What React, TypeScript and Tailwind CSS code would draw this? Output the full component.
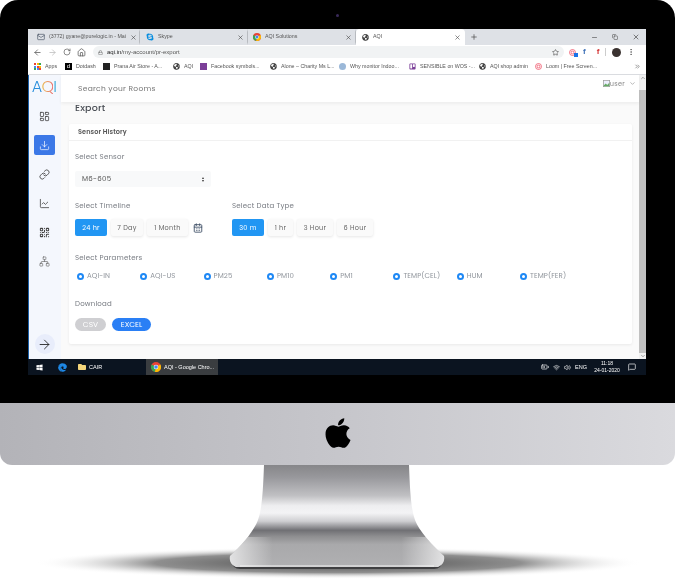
import React from 'react';
import {
  ArrowLeft, ArrowRight, RotateCw, Home, Lock, Star, X, Plus, Minus, Copy, MoreVertical, ChevronDown,
  Download, Link, ChartLine, QrCode, Network, LayoutDashboard, CalendarDays, ChevronsRight, ChevronUp, Mail,
  Volume2, Wifi, BatteryMedium, MessageSquare,
} from 'lucide-react';
import { FaApple, FaWindows, FaEdge, FaSkype, FaGlobeAmericas, FaTrello, FaFolder } from 'react-icons/fa';

const sans = "font-['Poppins','Lato','Noto_Sans',sans-serif]";

const ChromeDot = ({ size = 8 }: { size?: number }) => (
  <svg width={size} height={size} viewBox="0 0 20 20" className="shrink-0">
    <circle cx="10" cy="10" r="10" fill="#ea4335" />
    <path d="M10 10 L1.3 5 A10 10 0 0 0 8 19.8 Z" fill="#34a853" />
    <path d="M10 10 L8 19.8 A10 10 0 0 0 18.7 5 Z" fill="#fbbc04" />
    <circle cx="10" cy="10" r="4.6" fill="#fff" />
    <circle cx="10" cy="10" r="3.6" fill="#4285f4" />
  </svg>
);

const Target = ({ size = 7 }: { size?: number }) => (
  <svg width={size} height={size} viewBox="0 0 20 20" className="shrink-0" fill="none" stroke="#ef5a6f" strokeWidth="2.4">
    <circle cx="10" cy="10" r="8.5" />
    <circle cx="10" cy="10" r="4" />
  </svg>
);

const tabs = [
  { title: '(3772) gyane@purelogic.in - Mai', pl: 'pl-[5px]', icon: <Mail size={8} className="text-gray-600 shrink-0" /> },
  { title: 'Skype', pl: 'pl-[6px]', icon: <FaSkype size={8} className="text-[#0a8fe0] shrink-0" /> },
  { title: 'AQI Solutions', pl: 'pl-[5px]', icon: <ChromeDot /> },
];

const bookmarks = [
  { w: 'w-[38px]', text: 'Dotdash', icon: <span className="w-[7px] h-[7px] bg-black text-white text-[6px] leading-[7px] text-center shrink-0">d</span> },
  { w: 'w-[70px]', text: 'Prana Air Store - A...', icon: <span className="w-[7px] h-[7px] bg-[#222] shrink-0" /> },
  { w: 'w-[27px]', text: 'AQI', icon: <FaGlobeAmericas size={7} className="text-[#444] shrink-0" /> },
  { w: 'w-[70px]', text: 'Facebook symbols...', icon: <span className="w-[7px] h-[7px] bg-[#7b3f98] shrink-0" /> },
  { w: 'w-[69px]', text: 'Alone – Charity Ms L...', icon: <FaGlobeAmericas size={7} className="text-[#444] shrink-0" /> },
  { w: 'w-[70px]', text: 'Why monitor Indoo...', icon: <span className="w-[7px] h-[7px] rounded-full bg-[#9bb8d8] shrink-0" /> },
  { w: 'w-[70px]', text: 'SENSIBLE on WOS -...', icon: <FaTrello size={7} className="text-[#7b3f98] shrink-0" /> },
  { w: 'w-[56px]', text: 'AQI shop admin', icon: <FaGlobeAmericas size={7} className="text-[#444] shrink-0" /> },
  { w: 'w-[70px]', text: 'Loom | Free Screen...', icon: <Target /> },
];

const sideIcons = [
  { Icon: LayoutDashboard, sw: 1.6, tone: 'text-[#333]' },
  { Icon: Download, sw: 1.5, tone: 'bg-[#3b78e7] text-white' },
  { Icon: Link, sw: 1.7, tone: 'text-[#333]' },
  { Icon: ChartLine, sw: 1.6, tone: 'text-[#333]' },
  { Icon: QrCode, sw: 2.2, tone: 'text-[#444]' },
  { Icon: Network, sw: 1.4, tone: 'text-[#666]' },
];
const params = ['AQI-IN', 'AQI-US', 'PM25', 'PM10', 'PM1', 'TEMP(CEL)', 'HUM', 'TEMP(FER)'];

const Label = ({ children, className = '' }: { children: React.ReactNode; className?: string }) => (
  <div className={`h-[10px] leading-[10px] text-[7px] tracking-[0.2px] text-[#777b82] ${className}`}>{children}</div>
);

const Seg = ({ children, active, w }: { children: React.ReactNode; active?: boolean; w: string }) => (
  <span
    className={`${w} h-[17px] rounded-[2px] flex items-center justify-center text-[6.5px] tracking-[0.3px] ${
      active ? 'bg-[#2196f3] text-white' : 'bg-[#fafafa] text-[#666] shadow-[0_1px_3px_rgba(0,0,0,0.1)]'
    }`}
  >
    {children}
  </span>
);

function Browser() {
  return (
    <div className="w-full h-[330px] flex flex-col bg-white overflow-hidden">
      {/* tab strip */}
      <div className="h-[16px] bg-[#dee1e6] flex items-end pl-[4px] text-[5.3px] text-[#555] font-['Liberation_Sans',sans-serif]">
        {tabs.map((t) => (
          <div key={t.title} className={`w-[108px] h-[16px] flex items-center gap-[4px] ${t.pl} pr-[3px] border-r border-[#b8bbc0] border-y-[3px] border-y-[#dee1e6]`}>
            {t.icon}
            <span className="flex-1 whitespace-nowrap">{t.title}</span>
            <X size={7} className="text-[#444] shrink-0" />
          </div>
        ))}
        <div className="w-[109px] h-[16px] bg-white rounded-t-[4px] flex items-center gap-[4px] pl-[6px] pr-[4px]">
          <FaGlobeAmericas size={7} className="text-[#444] shrink-0" />
          <span className="flex-1">AQI</span>
          <X size={7} className="text-[#444]" />
        </div>
        <Plus size={8} className="ml-[5px] mb-[4px] text-[#444]" />
        <div className="ml-auto flex items-center gap-[14px] pr-[6px] h-[16px]">
          <Minus size={7} className="text-[#444]" />
          <Copy size={6} className="text-[#444]" />
          <X size={8} className="text-[#444]" />
        </div>
      </div>

      {/* toolbar */}
      <div className="h-[14px] flex items-center pl-[5px] text-[#555] font-['Liberation_Sans',sans-serif]">
        <ArrowLeft size={9} />
        <ArrowRight size={9} className="ml-[6px] text-[#bbb]" />
        <RotateCw size={8} className="ml-[6px]" />
        <Home size={9} className="ml-[6px]" />
        <div className="ml-[7px] w-[471px] h-[12px] rounded-full bg-[#f1f3f4] flex items-center pl-[5px] pr-[5px] text-[6px]">
          <Lock size={5} />
          <span className="ml-[4px]"><span className="text-[#222]">aqi.in</span>/my-account/pr-export</span>
          <Star size={7} className="ml-auto text-[#444]" />
        </div>
        <span className="ml-[5px] relative"><Target size={7} /><span className="absolute -right-[2px] -bottom-[1px] w-[4px] h-[4px] bg-[#1a73e8]" /></span>
        <span className="ml-[7px] text-[8px] font-bold leading-none text-[#3b6fb6]">f</span>
        <span className="ml-[11px] text-[8px] font-bold leading-none text-[#d32f2f]">f</span>
        <span className="ml-[6px] w-px h-[8px] bg-[#ccc]" />
        <span className="ml-[6px] w-[9px] h-[9px] rounded-full bg-[#3a3230]" />
        <MoreVertical size={8} className="ml-[6px]" />
      </div>

      {/* bookmarks */}
      <div className="h-[16px] flex items-center pl-[6px] pr-[5px] text-[5.3px] text-[#555] border-b border-[#dadce0] font-['Liberation_Sans',sans-serif]">
        <div className="w-[31px] flex items-center gap-[4px]">
          <span className="w-[7px] h-[7px] grid grid-cols-3 gap-[0.5px]">
            {['#ea4335', '#fbbc04', '#34a853', '#4285f4', '#ea4335', '#fbbc04', '#34a853', '#4285f4', '#ea4335'].map((c, i) => (
              <span key={i} className="bg-current" style={{ color: c }} />
            ))}
          </span>
          Apps
        </div>
        {bookmarks.map((b) => (
          <div key={b.text} className={`${b.w} flex items-center gap-[4px]`}>
            {b.icon}
            <span className="whitespace-nowrap">{b.text}</span>
          </div>
        ))}
        <ChevronsRight size={7} className="ml-auto" />
      </div>

      {/* page */}
      <div className={`flex-1 min-h-0 flex ${sans}`}>
        <aside className="w-[33px] bg-[#f4f7fd] flex flex-col items-center shadow-[inset_1px_0_0_#1a5fa8]">
          <div className="h-[27px] w-full flex items-center justify-center pb-[3px] text-[16px] leading-none font-light tracking-[-0.8px] pr-[1px]">
            <span className="text-[#2a8fdc]">A</span>
            <span className="bg-gradient-to-r from-[#e8c040] to-[#e86a6a] bg-clip-text text-transparent">Q</span>
            <span className="text-[#39a8d8]">I</span>
          </div>
          <div className="mt-[4px] flex flex-col gap-[9px] items-center">
            {sideIcons.map(({ Icon, sw, tone }, i) => (
              <span key={i} className={`w-[21px] h-[20px] rounded-[2px] flex items-center justify-center ${tone}`}>
                <Icon size={11} strokeWidth={sw} />
              </span>
            ))}
          </div>
          <span className="mt-auto mb-[5px] w-[20px] h-[20px] rounded-full bg-[#e8edfb] flex items-center justify-center text-[#222]">
            <ArrowRight size={15} strokeWidth={1.4} />
          </span>
        </aside>

        <div className="flex-1 min-w-0 flex flex-col">
          <div className="relative z-10 h-[27px] shrink-0 bg-white shadow-[0_2px_3px_rgba(0,0,0,0.05)] flex items-center pl-[17px] pr-[3px] text-[7.5px] tracking-[0.3px] text-[#777]">
            Search your Rooms
            <span className="ml-auto flex items-center gap-[4px] text-[6.5px] text-[#888] -mt-[10px]">
              <span className="flex items-center">
                <svg width="7" height="7" viewBox="0 0 10 10"><rect x="0.5" y="0.5" width="9" height="9" fill="#eef" stroke="#999" /><path d="M1 8 L4 5 L6 7 L9 4 V9 H1 Z" fill="#6a6" /></svg>
                user
              </span>
              <ChevronDown size={7} />
            </span>
          </div>
          <div className="flex-1 min-h-0 bg-[#fafafa] pl-[8px] pr-[7px]">
            <div className="h-[22px] flex items-center pb-[10px] pl-[6px] text-[9.5px] font-medium tracking-[0.2px] text-[#4a4e55]">Export</div>
            <section className="h-[220px] bg-white rounded-[2px] shadow-[0_1px_3px_rgba(0,0,0,0.07)]">
              <div className="h-[17px] flex items-center px-[9px] border-b border-[#f1f1f1] text-[6.5px] font-semibold tracking-[0.1px] text-[#555]">Sensor History</div>
              <div className="pl-[6px] pt-[11px]">
                <Label>Select Sensor</Label>
                <div className="mt-[9px] w-[136px] h-[16px] rounded-[2px] bg-[#f8f9fa] flex items-center justify-between px-[7px] text-[7px] tracking-[0.3px] text-[#555]">
                  M6-605
                  <span className="flex flex-col text-black">
                    <span className="w-0 h-0 border-x-[1.5px] border-x-transparent border-b-[2px] border-b-[#333]" />
                    <span className="mt-[1px] w-0 h-0 border-x-[1.5px] border-x-transparent border-t-[2px] border-t-[#333]" />
                  </span>
                </div>

                <div className="mt-[14px] flex">
                  <div className="w-[157px]">
                    <Label>Select Timeline</Label>
                    <div className="mt-[8px] flex items-center gap-[4px]">
                      <Seg active w="w-[32px]">24 hr</Seg>
                      <Seg w="w-[32px]">7 Day</Seg>
                      <Seg w="w-[41px]">1 Month</Seg>
                      <CalendarDays size={10} strokeWidth={2.2} className="ml-[1px] text-[#44546a]" />
                    </div>
                  </div>
                  <div>
                    <Label>Select Data Type</Label>
                    <div className="mt-[8px] flex items-center gap-[4px]">
                      <Seg active w="w-[32px]">30 m</Seg>
                      <Seg w="w-[25px]">1 hr</Seg>
                      <Seg w="w-[36px]">3 Hour</Seg>
                      <Seg w="w-[36px]">6 Hour</Seg>
                    </div>
                  </div>
                </div>

                <Label className="mt-[17px]">Select Parameters</Label>
                <div className="mt-[8px] pl-[2px] grid grid-cols-[repeat(8,63.3px)]">
                  {params.map((p) => (
                    <div key={p} className="h-[10px] flex items-center gap-[3px] text-[7px] tracking-[0.1px] text-[#8f949b]">
                      <span className="w-[7px] h-[7px] rounded-full border-[2px] border-[#1e88f5] bg-white shrink-0" />
                      {p}
                    </div>
                  ))}
                </div>

                <Label className="mt-[18px]">Download</Label>
                <div className="mt-[9px] flex gap-[6px] text-[7.5px]">
                  <span className="w-[31px] h-[13px] rounded-full bg-[#cfcfd2] text-white flex items-center justify-center">CSV</span>
                  <span className="w-[39px] h-[13px] rounded-full bg-[#2a7ff5] text-white flex items-center justify-center">EXCEL</span>
                </div>
              </div>
            </section>
          </div>
        </div>

        {/* scrollbar */}
        <div className="w-[7px] bg-[#f1f1f1] flex flex-col items-center">
          <ChevronUp size={6} className="text-[#555]" />
          <div className="mt-[9px] flex-1 w-full bg-[#c1c1c1]" />
          <ChevronDown size={6} className="text-[#555]" />
        </div>
      </div>
    </div>
  );
}

function Taskbar() {
  return (
    <div className="w-full h-[16px] bg-[#0b1420] flex items-center text-white text-[5.5px] font-['Liberation_Sans',sans-serif]">
      <FaWindows size={7} className="ml-[8px]" />
      <FaEdge size={9} className="ml-[15px] text-[#1e88e5]" />
      <FaFolder size={8} className="ml-[11px] text-[#f5d67b]" />
      <span className="ml-[3px] w-[57px]">CAIR</span>
      <div className="w-[72px] h-full bg-[#3a3d40] flex items-center gap-[3px] pl-[5px]">
        <ChromeDot size={10} />
        <span className="truncate">AQI - Google Chro...</span>
      </div>
      <div className="ml-auto flex items-center gap-[4px] pr-[10px]">
        <BatteryMedium size={8} />
        <Wifi size={7} />
        <Volume2 size={7} />
        <span className="mr-[1px]">ENG</span>
        <span className="w-[30px] text-center leading-[7px] text-[5px]">11:18<br />24-01-2020</span>
        <MessageSquare size={8} className="ml-[2px]" />
      </div>
    </div>
  );
}

function Stand() {
  const body = 'M264 0 H409 C410 26 411 44 415 55 C419 66 432 80 444 91 C445 97 442 100 438 102 H236 C232 100 229 97 230 91 C242 80 254 66 258 55 C262 44 263 26 264 0 Z';
  return (
    <svg width="675" height="119" viewBox="0 0 675 119" className="block">
      <defs>
        <linearGradient id="stand" x1="0" y1="0" x2="0" y2="1">
          <stop offset="0" stopColor="#868689" />
          <stop offset="0.12" stopColor="#98989c" />
          <stop offset="0.3" stopColor="#c0c0c3" />
          <stop offset="0.4" stopColor="#eeeef0" />
          <stop offset="0.47" stopColor="#f3f3f5" />
          <stop offset="0.55" stopColor="#cfcfd2" />
          <stop offset="0.64" stopColor="#707074" />
          <stop offset="0.7" stopColor="#8e8e90" />
          <stop offset="0.78" stopColor="#a9a9ab" />
          <stop offset="1" stopColor="#b0b0b2" />
        </linearGradient>
        <linearGradient id="foot" x1="0" y1="0" x2="1" y2="0">
          <stop offset="0" stopColor="#fff" stopOpacity="0.65" />
          <stop offset="0.2" stopColor="#fff" stopOpacity="0" />
          <stop offset="0.8" stopColor="#fff" stopOpacity="0" />
          <stop offset="1" stopColor="#fff" stopOpacity="0.65" />
        </linearGradient>
        <radialGradient id="floor">
          <stop offset="0" stopColor="#4a4a4a" />
          <stop offset="0.6" stopColor="#8f8f8f" />
          <stop offset="1" stopColor="#fff" stopOpacity="0" />
        </radialGradient>
        <clipPath id="footClip"><rect x="225" y="72" width="225" height="32" /></clipPath>
      </defs>
      <ellipse cx="338" cy="98" rx="305" ry="16" fill="url(#floor)" />
      <path d="M232 96 C232 101 235 104 240 104 H434 C439 104 442 101 442 96 Z" fill="#3f3f41" />
      <path d={body} fill="url(#stand)" />
      <path d={body} fill="url(#foot)" clipPath="url(#footClip)" />
      <path d="M240 101 H434" stroke="#f4f4f4" strokeWidth="1" />
    </svg>
  );
}

export default function App() {
  return (
    <div className="w-[675px] h-[584px] bg-white overflow-hidden">
      <div className="w-full h-[403px] bg-black rounded-t-[18px] pt-[29px] pl-[28px] pr-[29px] relative">
        <span className="absolute left-[336px] top-[14px] w-[3px] h-[3px] rounded-full bg-[#3a2a5a]" />
        <div className="blur-[0.45px]">
          <Browser />
          <Taskbar />
        </div>
      </div>
      <div className="w-full h-[62px] rounded-b-[12px] bg-gradient-to-r from-[#b3b3b8] via-[#c6c6cb] to-[#dadade] flex items-center justify-center">
        <FaApple size={34} className="text-black -mt-[2px]" />
      </div>
      <Stand />
    </div>
  );
}
